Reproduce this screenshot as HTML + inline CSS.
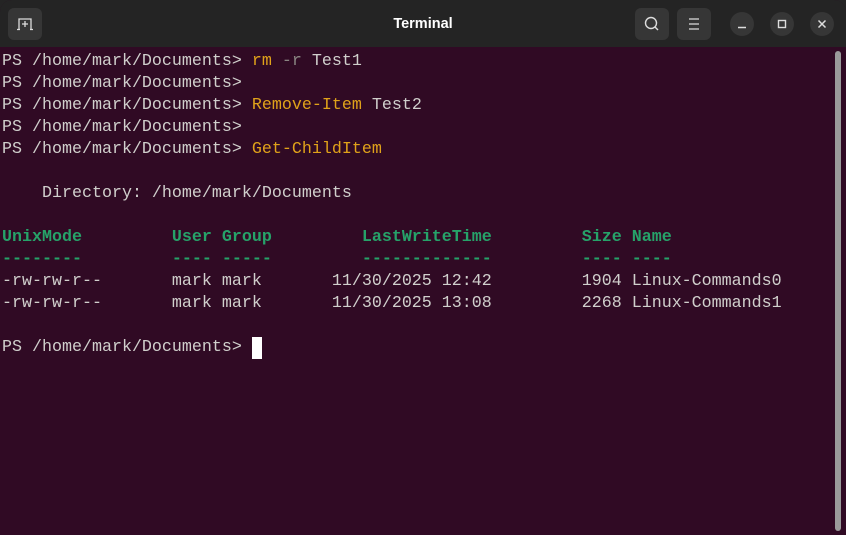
<!DOCTYPE html>
<html><head><style>
html,body{margin:0;padding:0;width:846px;height:535px;overflow:hidden;background:#242424;}
.win{position:absolute;left:0;top:0;width:846px;height:535px;background:#300a24;border-radius:12px 12px 0 0;overflow:hidden;}
.tb{position:absolute;left:0;top:0;width:846px;height:47px;background:#242424;}
.title{position:absolute;left:0;right:0;top:16px;text-align:center;color:#ffffff;font:bold 14.5px "Liberation Sans",sans-serif;}
.btn{position:absolute;top:8px;width:34px;height:32px;background:#363636;border-radius:6px;}
.cb{position:absolute;top:12px;width:24px;height:24px;background:#363636;border-radius:50%;}
pre{position:absolute;left:2px;top:51px;margin:0;font:16.67px/22px "Liberation Mono","DejaVu Sans Mono",monospace;color:#d0cfcc;}
.o{color:#e0a21a}.d{color:#8a8582}.g{color:#26a269;font-weight:bold}
.cur{display:inline-block;width:10px;height:22px;background:#ffffff;vertical-align:top;}
.sb{position:absolute;left:835px;top:51px;width:6px;height:480px;background:#9a9a9a;border-radius:3px;}
</style></head><body>
<div class="win">
<div class="tb">
<div class="btn" style="left:8px"><svg width="34" height="32"><path d="M11 21V11h12v10" fill="none" stroke="#ddd" stroke-width="1.3"/><path d="M17 13v6M14 16h6" stroke="#ddd" stroke-width="1.3"/><path d="M9 21.5h3M22 21.5h3" stroke="#ddd" stroke-width="1.3"/></svg></div>
<div class="title">Terminal</div>
<div class="btn" style="left:635px"><svg width="34" height="32"><circle cx="16" cy="15" r="5.5" fill="none" stroke="#ddd" stroke-width="1.4"/><path d="M20 19l3 3" stroke="#ddd" stroke-width="1.4"/></svg></div>
<div class="btn" style="left:677px"><svg width="34" height="32"><path d="M12 11h10M12 16h10M12 21h10" stroke="#ddd" stroke-width="1.3"/></svg></div>
<div class="cb" style="left:730px"><svg width="24" height="24"><path d="M8 15.5h8" stroke="#ddd" stroke-width="1.5"/></svg></div>
<div class="cb" style="left:770px"><svg width="24" height="24"><rect x="8.5" y="8.5" width="7" height="7" fill="none" stroke="#ddd" stroke-width="1.4"/></svg></div>
<div class="cb" style="left:810px"><svg width="24" height="24"><path d="M8.5 8.5l7 7M15.5 8.5l-7 7" stroke="#ddd" stroke-width="1.5"/></svg></div>
</div>
<pre>PS /home/mark/Documents&gt; <span class="o">rm</span> <span class="d">-r</span> Test1
PS /home/mark/Documents&gt;
PS /home/mark/Documents&gt; <span class="o">Remove-Item</span> Test2
PS /home/mark/Documents&gt;
PS /home/mark/Documents&gt; <span class="o">Get-ChildItem</span>

    Directory: /home/mark/Documents

<span class="g">UnixMode         User Group         LastWriteTime         Size Name</span>
<span class="g">--------         ---- -----         -------------         ---- ----</span>
-rw-rw-r--       mark mark       11/30/2025 12:42         1904 Linux-Commands0
-rw-rw-r--       mark mark       11/30/2025 13:08         2268 Linux-Commands1

PS /home/mark/Documents&gt; <span class="cur"></span></pre>
<div class="sb"></div>
</div>
</body></html>
